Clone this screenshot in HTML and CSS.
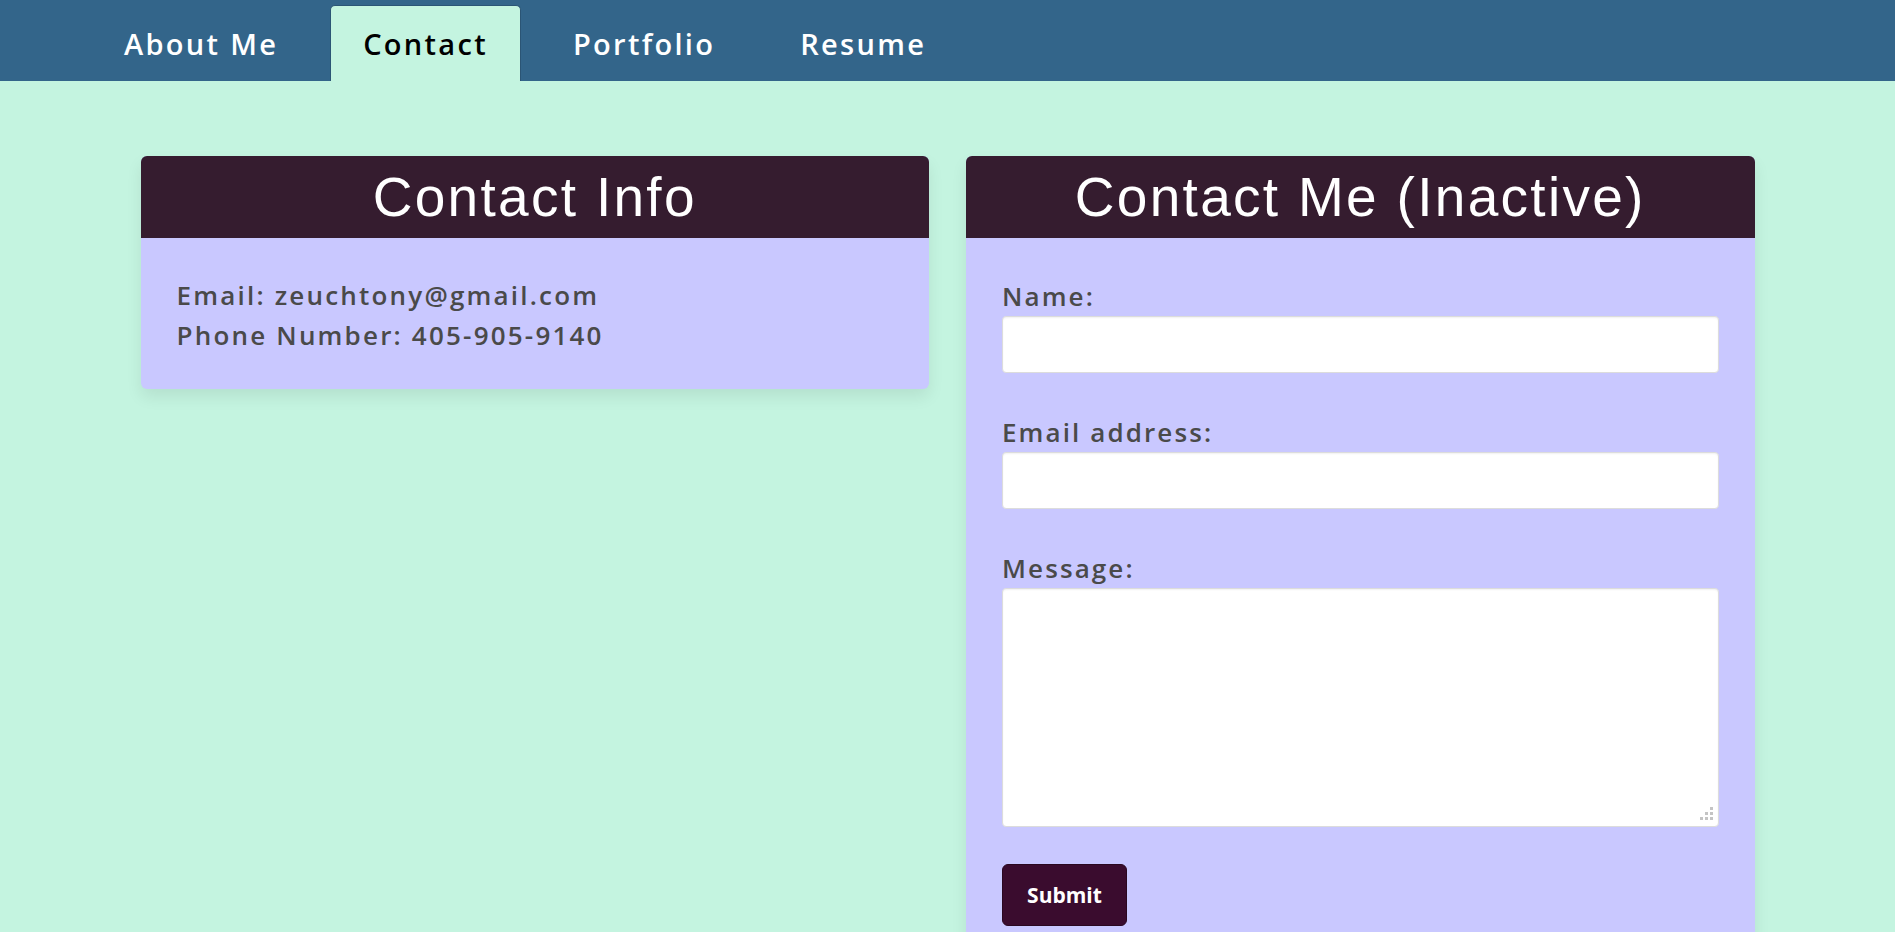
FILE: index.html
```html
<!DOCTYPE html>
<html lang="en">
<head>
<meta charset="utf-8">
<title>Contact</title>
<link rel="stylesheet" href="styles.css">
</head>
<body>
<header class="topbar">
  <nav class="tabs">
    <a class="tab" href="#">About Me</a>
    <a class="tab active" href="#">Contact</a>
    <a class="tab" href="#">Portfolio</a>
    <a class="tab" href="#">Resume</a>
  </nav>
</header>
<main class="page">
  <section class="card card-info">
    <h2 class="card-title">Contact Info</h2>
    <div class="card-body">
      <p class="info-line">Email: zeuchtony@gmail.com</p>
      <p class="info-line">Phone Number: 405-905-9140</p>
    </div>
  </section>
  <section class="card">
    <h2 class="card-title">Contact Me (Inactive)</h2>
    <form class="card-body form">
      <div class="field">
        <label class="label" for="name">Name:</label>
        <input class="input" id="name" type="text">
      </div>
      <div class="field">
        <label class="label" for="email">Email address:</label>
        <input class="input" id="email" type="email">
      </div>
      <div class="field">
        <label class="label" for="msg">Message:</label>
        <div class="textarea-wrap">
          <textarea class="input textarea" id="msg"></textarea>
          <svg class="grip" width="14" height="14" viewBox="0 0 14 14" aria-hidden="true">
            <g fill="#c4c4c4">
              <rect x="10" y="0" width="3" height="3"/>
              <rect x="10" y="5" width="3" height="3"/>
              <rect x="5" y="5" width="3" height="3"/>
              <rect x="10" y="10" width="3" height="3"/>
              <rect x="5" y="10" width="3" height="3"/>
              <rect x="0" y="10" width="3" height="3"/>
            </g>
          </svg>
        </div>
      </div>
      <button class="submit" type="button">Submit</button>
    </form>
  </section>
</main>
</body>
</html>
```
FILE: styles.css
```css
* { box-sizing: border-box; }
html, body { margin: 0; padding: 0; }
body {
  background: #c4f4e0;
  font-family: "Open Sans", "Noto Sans", sans-serif;
  color: #4a4a4a;
  height: 932px;
  overflow: hidden;
}
.topbar {
  background: #33658a;
  height: 81px;
  display: flex;
  align-items: flex-end;
}
.tabs {
  display: flex;
  gap: 19px;
  padding-left: 91px;
  height: 76px;
}
.tab {
  display: flex;
  align-items: center;
  padding: 0 32px;
  color: #ffffff;
  text-decoration: none;
  font-size: 29px;
  font-weight: 600;
  letter-spacing: 2.3px;
  border-radius: 5px 5px 0 0;
  border: 1px solid transparent;
  border-bottom: 0;
}
.tab.active {
  background: #c4f4e0;
  color: #000000;
  border-color: #2b5575;
}
.page {
  width: 1614px;
  margin: 75px auto 0;
  display: grid;
  grid-template-columns: 1fr 1fr;
  column-gap: 37px;
  align-items: start;
}
.card {
  border-radius: 6px;
  overflow: hidden;
  background: #c9c8ff;
  box-shadow: 0 8px 16px rgba(0, 0, 0, 0.08);
}
.card-title {
  margin: 0;
  height: 82px;
  background: #351c2f;
  color: #ffffff;
  font-family: "Liberation Sans", Arial, sans-serif;
  font-weight: 400;
  font-size: 55px;
  letter-spacing: 2.3px;
  line-height: 82px;
  text-align: center;
}
.card-body {
  padding: 37px 36px 34px;
}
.info-line {
  margin: 0;
  font-size: 26px;
  font-weight: 600;
  line-height: 40px;
  letter-spacing: 2.2px;
}
.form {
  padding-top: 40px;
  padding-bottom: 40px;
}
.field {
  margin-bottom: 41px;
}
.label {
  display: block;
  font-size: 26px;
  font-weight: 600;
  line-height: 36px;
  letter-spacing: 2.1px;
  margin-bottom: 2px;
}
.input {
  display: block;
  width: 100%;
  height: 57px;
  background: #ffffff;
  border: 1px solid #dcdcdc;
  border-radius: 4px;
  box-shadow: inset 0 1px 2px rgba(0, 0, 0, 0.06);
  font: inherit;
}
.textarea-wrap {
  position: relative;
}
.textarea {
  height: 239px;
  resize: none;
}
.grip {
  position: absolute;
  right: 5px;
  bottom: 6px;
}
.field:last-of-type { margin-bottom: 37px; }
.submit {
  width: 125px;
  height: 62px;
  background: #3a0c2e;
  color: #ffffff;
  border: 1px solid #2a0820;
  border-radius: 6px;
  font-family: "Open Sans", sans-serif;
  font-weight: 700;
  font-size: 21px;
  padding: 0;
}
```
